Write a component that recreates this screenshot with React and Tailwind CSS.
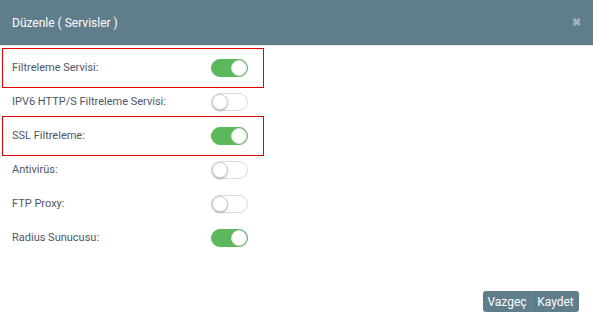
import React, { useState } from 'react';

const Toggle = ({ on, onChange }) => (
    <button
        onClick={onChange}
        className={`relative w-[37px] h-[18px] rounded-full border transition-colors ${on ? 'bg-[#5cb85c] border-[#5cb85c]' : 'bg-white border-[#dcdcdc]'}`}
    >
        <span
            className={`absolute top-[0px] w-[16px] h-[16px] rounded-full bg-white border ${on ? 'left-[19px] border-[#e2e2e2]' : 'left-[0px] border-[#d0d0d0] shadow-[0_1px_2px_rgba(0,0,0,0.25)]'}`}
        />
    </button>
);

export default function App() {
    const [services, setServices] = useState([
        { label: 'Filtreleme Servisi:', on: true, marked: true },
        { label: 'IPV6 HTTP/S Filtreleme Servisi:', on: false },
        { label: 'SSL Filtreleme:', on: true, marked: true },
        { label: 'Antivirüs:', on: false },
        { label: 'FTP Proxy:', on: false },
        { label: 'Radius Sunucusu:', on: true },
    ]);

    const toggle = (i) => {
        setServices(services.map((s, j) => (j === i ? { ...s, on: !s.on } : s)));
    };

    return (
        <div className="w-[593px] h-[326px] bg-white flex flex-col" style={{ fontFamily: 'Roboto, "Liberation Sans", sans-serif' }}>
            <div className="h-[46px] shrink-0 bg-[#607d8b] border-b border-[#e4e7e9] flex items-center justify-between pl-[12px] pr-[12px]">
                <span className="text-white text-[12px]">Düzenle ( Servisler )</span>
                <span className="text-[#a3b3bb] text-[11px] font-bold leading-none">✖</span>
            </div>

            <div className="flex flex-col pt-[5px] px-[5px]">
                {services.map((s, i) => (
                    <div
                        key={s.label}
                        className={`w-[256px] h-[34px] flex items-center pl-[7px] ${s.marked ? 'outline outline-1 outline-[#e00000] outline-offset-[2px]' : ''}`}
                    >
                        <span className="w-[199px] text-[11px] text-[#4e5666]">{s.label}</span>
                        <Toggle on={s.on} onChange={() => toggle(i)} />
                    </div>
                ))}
            </div>

            <div className="flex-1" />

            <div className="flex justify-end pr-[14px] pb-[14px]">
                <div className="flex rounded-[3px] overflow-hidden">
                    <button className="w-[49px] h-[21px] bg-[#607d8b] text-white text-[12px] border-r border-[#6f8a96]">Vazgeç</button>
                    <button className="w-[47px] h-[21px] bg-[#607d8b] text-white text-[12px]">Kaydet</button>
                </div>
            </div>
        </div>
    );
}
